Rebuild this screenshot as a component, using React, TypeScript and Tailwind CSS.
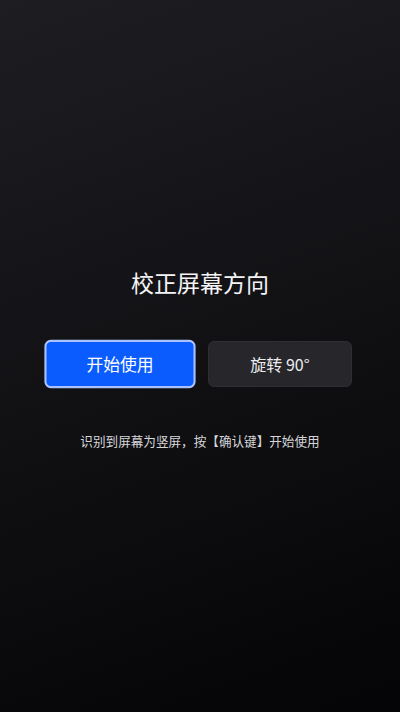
import React from 'react';

export default function App() {
  return (
    <div
      className="flex h-[712px] w-full flex-col items-center justify-center bg-[linear-gradient(160deg,#1e1d22_0%,#111114_50%,#040406_100%)] pt-[5px] text-white"
      style={{ fontFamily: '"Noto Sans CJK SC", "Noto Sans", sans-serif' }}
    >
      <h1 className="text-[23px] leading-[32px] font-normal text-[#f4f4f6]">校正屏幕方向</h1>
      <div className="mt-[43px] flex gap-4">
        <button
          type="button"
          className="h-[46px] w-[144px] scale-105 rounded-md border-2 border-[#a9c2ff] bg-[#0a5cff] text-[16px] text-white"
        >
          开始使用
        </button>
        <button
          type="button"
          className="h-[46px] w-[144px] rounded-md border border-[#2e2e33] bg-[#27272b] text-[16px] text-[#ececef]"
        >
          旋转 90°
        </button>
      </div>
      <p className="mt-[44px] text-[12.6px] leading-[20px] text-[#d6d6da]">识别到屏幕为竖屏，按【确认键】开始使用</p>
    </div>
  );
}
